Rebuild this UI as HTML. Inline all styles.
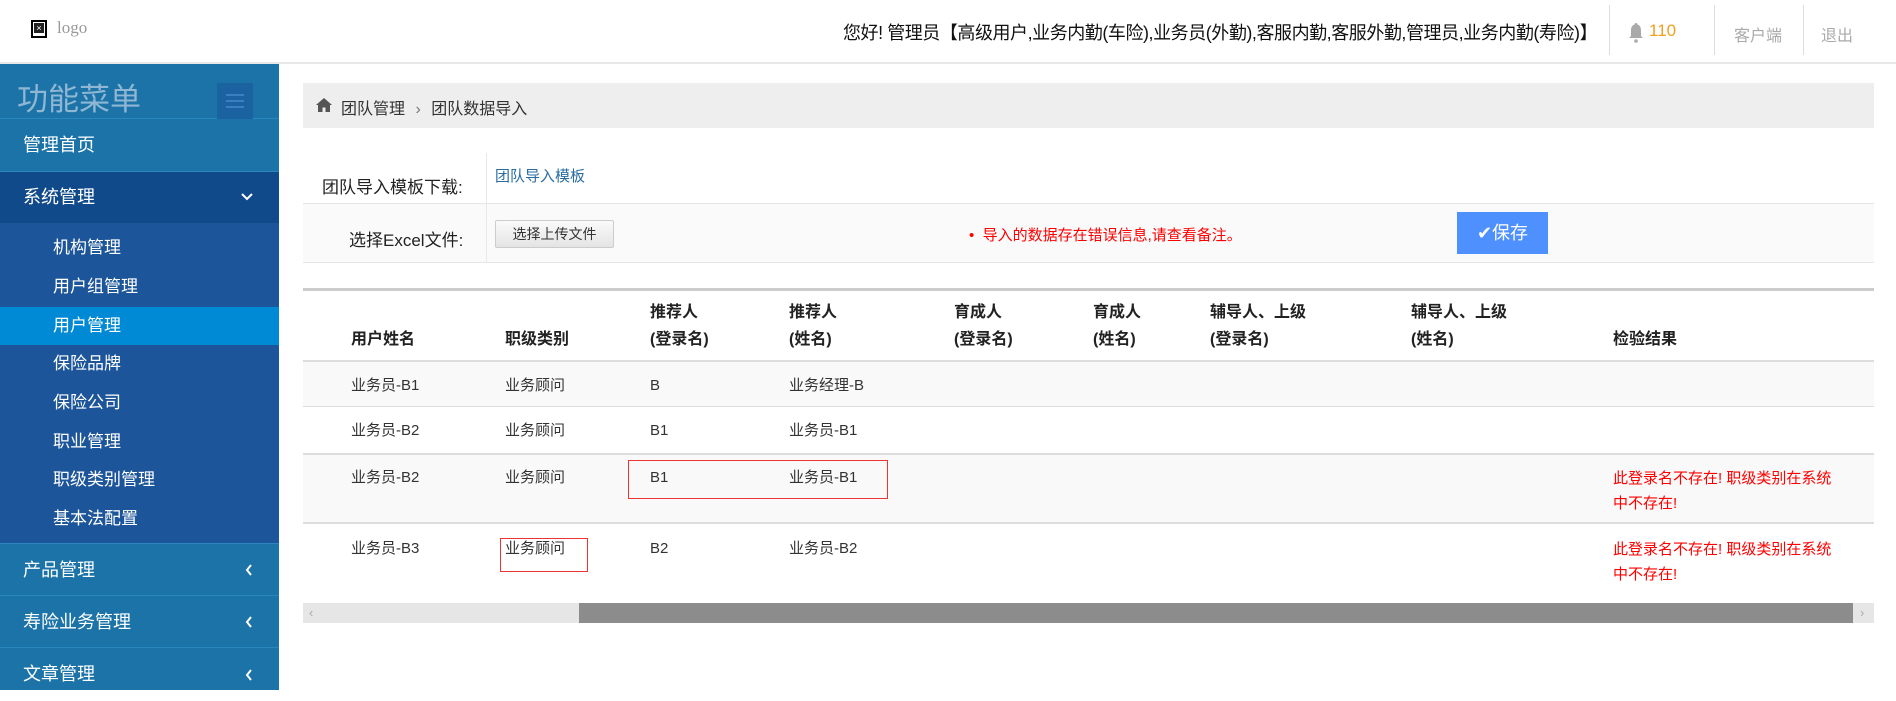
<!DOCTYPE html>
<html><head><meta charset="utf-8"><style>
*{margin:0;padding:0;box-sizing:border-box}
body{width:1896px;height:690px;overflow:hidden;background:#fff;font-family:"Liberation Sans","Noto Sans CJK SC",sans-serif;color:#333;position:relative}
.a{position:absolute;white-space:nowrap}
.side{position:absolute;left:0;top:64px;width:279px;height:626px;background:#1b73a8}
.mi{position:absolute;left:0;width:279px;color:#fff;font-size:18px;padding-left:23px;border-bottom:1px solid #2a86bf}
.si{position:absolute;left:0;width:279px;height:38px;line-height:38px;color:#fff;font-size:17px;padding-left:53px}
.th{position:absolute;font-weight:bold;font-size:16px;line-height:27px;color:#222}
.td{position:absolute;font-size:15px;line-height:20px;color:#333}
.red{color:#f00;font-size:15px;line-height:25px}
.chl{position:absolute;left:245px;top:50%;margin-top:-6px}
</style></head><body>
<div class="a" style="left:0;top:0;width:1896px;height:64px;border-bottom:2px solid #e8e8e8"></div>
<div class="a" style="left:31px;top:20px;width:16px;height:18px;border:2px solid #000;background:#fff"><div style="position:absolute;left:1px;top:1px;width:10px;height:10px;background:#222;color:#fff;font-size:9px;line-height:10px;text-align:center">×</div></div>
<div class="a" style="left:57px;top:18px;font-size:17px;color:#999;font-family:'Liberation Serif',serif">logo</div>
<div class="a" style="left:843px;top:19px;font-size:18px;color:#111;letter-spacing:-0.45px">您好! 管理员【高级用户,业务内勤(车险),业务员(外勤),客服内勤,客服外勤,管理员,业务内勤(寿险)】</div>
<div class="a" style="left:1609px;top:5px;width:1px;height:50px;background:#ddd"></div>
<div class="a" style="left:1714px;top:5px;width:1px;height:50px;background:#ddd"></div>
<div class="a" style="left:1803px;top:5px;width:1px;height:50px;background:#ddd"></div>
<svg class="a" style="left:1628px;top:22px" width="16" height="22" viewBox="0 0 16 22"><path d="M8 1c-1 0-1.5.7-1.5 1.5C3.5 3.5 3 6 3 9v5l-2 2h14l-2-2V9c0-3-.5-5.5-3.5-6.5C9.5 1.7 9 1 8 1z" fill="#aaa"/><circle cx="8" cy="19" r="1.8" fill="#aaa"/></svg>
<div class="a" style="left:1649px;top:21px;font-size:17px;color:#f0a020">110</div>
<div class="a" style="left:1734px;top:22px;font-size:16px;color:#aaa">客户端</div>
<div class="a" style="left:1821px;top:22px;font-size:16px;color:#aaa">退出</div>
<div class="side"></div>
<div class="a" style="left:0;top:66px;width:279px;height:53px;border-bottom:1px solid #2a86bf"></div>
<div class="a" style="left:17px;top:74px;font-size:31px;color:#8fb6d2">功能菜单</div>
<div class="a" style="left:217px;top:83px;width:36px;height:36px;background:#1a62a0"><div style="margin:11px 9px;height:2px;background:#3a7fc0;box-shadow:0 6px 0 #3a7fc0,0 12px 0 #3a7fc0"></div></div>
<div class="mi" style="top:119px;height:53px;line-height:53px">管理首页</div>
<div class="mi" style="top:172px;height:51px;line-height:51px;background:#104a8a;border:none">系统管理<svg style="position:absolute;left:241px;top:21px" width="12" height="8" viewBox="0 0 12 8"><path d="M1 1l5 5 5-5" stroke="#fff" stroke-width="2" fill="none"/></svg></div>
<div class="a" style="left:0;top:223px;width:279px;height:320px;background:#1c5599"></div>
<div class="si" style="top:229px">机构管理</div>
<div class="si" style="top:268px">用户组管理</div>
<div class="si" style="top:307px;background:#0089d5">用户管理</div>
<div class="si" style="top:345px">保险品牌</div>
<div class="si" style="top:384px">保险公司</div>
<div class="si" style="top:423px">职业管理</div>
<div class="si" style="top:461px">职级类别管理</div>
<div class="si" style="top:500px">基本法配置</div>
<div class="mi" style="top:543px;height:53px;line-height:53px;border-top:1px solid #2a86bf">产品管理<svg class="chl" width="8" height="12" viewBox="0 0 8 12"><path d="M6 1L2 6l4 5" stroke="#fff" stroke-width="2" fill="none"/></svg></div>
<div class="mi" style="top:596px;height:52px;line-height:52px">寿险业务管理<svg class="chl" width="8" height="12" viewBox="0 0 8 12"><path d="M6 1L2 6l4 5" stroke="#fff" stroke-width="2" fill="none"/></svg></div>
<div class="mi" style="top:648px;height:53px;line-height:53px;border:none">文章管理<svg class="chl" width="8" height="12" viewBox="0 0 8 12"><path d="M6 1L2 6l4 5" stroke="#fff" stroke-width="2" fill="none"/></svg></div>
<div class="a" style="left:303px;top:83px;width:1571px;height:45px;background:#eee"></div>
<svg class="a" style="left:316px;top:98px" width="16" height="14" viewBox="0 0 16 14"><path d="M8 0L0 7h2v7h4.5V9.5h3V14H14V7h2z" fill="#555"/></svg>
<div class="a" style="left:341px;top:95px;font-size:16px;color:#333">团队管理 <span style="color:#777;margin:0 6px">›</span> 团队数据导入</div>
<div class="a" style="left:303px;top:203px;width:1571px;height:60px;background:#fafafa;border-top:1px solid #e6e6e6;border-bottom:1px solid #e6e6e6"></div>
<div class="a" style="left:486px;top:153px;width:1px;height:110px;background:#e8e8e8"></div>
<div class="a" style="left:322px;top:173px;font-size:17px;color:#222">团队导入模板下载:</div>
<div class="a" style="left:495px;top:165px;font-size:15px;color:#2a6ca0">团队导入模板</div>
<div class="a" style="left:349px;top:226px;font-size:17px;color:#222">选择Excel文件:</div>
<div class="a" style="left:495px;top:220px;width:119px;height:28px;border:1px solid #ccc;border-radius:2px;background:linear-gradient(#fafafa,#e4e4e4);font-size:14px;line-height:26px;text-align:center;color:#333">选择上传文件</div>
<div class="a" style="left:969px;top:224px;font-size:15px;color:#f00">• &nbsp;导入的数据存在错误信息,请查看备注。</div>
<div class="a" style="left:1457px;top:212px;width:91px;height:42px;background:#4d90fe;color:#fff;font-size:18px;line-height:42px;text-align:center">✔保存</div>
<div class="a" style="left:303px;top:288px;width:1571px;height:3px;background:#ccc"></div>
<div class="th" style="left:351px;top:326px">用户姓名</div>
<div class="th" style="left:505px;top:326px">职级类别</div>
<div class="th" style="left:650px;top:299px">推荐人<br>(登录名)</div>
<div class="th" style="left:789px;top:299px">推荐人<br>(姓名)</div>
<div class="th" style="left:954px;top:299px">育成人<br>(登录名)</div>
<div class="th" style="left:1093px;top:299px">育成人<br>(姓名)</div>
<div class="th" style="left:1210px;top:299px">辅导人、上级<br>(登录名)</div>
<div class="th" style="left:1411px;top:299px">辅导人、上级<br>(姓名)</div>
<div class="th" style="left:1613px;top:326px">检验结果</div>
<div class="a" style="left:303px;top:360px;width:1571px;height:47px;background:#f9f9f9;border-top:2px solid #ddd;border-bottom:1px solid #ddd"></div>
<div class="a" style="left:303px;top:453px;width:1571px;height:71px;background:#f9f9f9;border-top:2px solid #ddd;border-bottom:2px solid #ddd"></div>
<div class="td" style="left:351px;top:376px">业务员-B1</div><div class="td" style="left:505px;top:376px">业务顾问</div><div class="td" style="left:650px;top:376px">B</div><div class="td" style="left:789px;top:376px">业务经理-B</div>
<div class="td" style="left:351px;top:421px">业务员-B2</div><div class="td" style="left:505px;top:421px">业务顾问</div><div class="td" style="left:650px;top:421px">B1</div><div class="td" style="left:789px;top:421px">业务员-B1</div>
<div class="td" style="left:351px;top:468px">业务员-B2</div><div class="td" style="left:505px;top:468px">业务顾问</div><div class="td" style="left:650px;top:468px">B1</div><div class="td" style="left:789px;top:468px">业务员-B1</div>
<div class="td red" style="left:1613px;top:466px">此登录名不存在! 职级类别在系统<br>中不存在!</div>
<div class="a" style="left:628px;top:460px;width:260px;height:39px;border:1px solid #e33"></div>
<div class="td" style="left:351px;top:539px">业务员-B3</div><div class="td" style="left:505px;top:539px">业务顾问</div><div class="td" style="left:650px;top:539px">B2</div><div class="td" style="left:789px;top:539px">业务员-B2</div>
<div class="td red" style="left:1613px;top:537px">此登录名不存在! 职级类别在系统<br>中不存在!</div>
<div class="a" style="left:500px;top:538px;width:88px;height:34px;border:1px solid #e33"></div>
<div class="a" style="left:303px;top:603px;width:1571px;height:20px;background:#e6e6e6"></div>
<div class="a" style="left:579px;top:603px;width:1274px;height:20px;background:#8c8c8c"></div>
<div class="a" style="left:309px;top:603px;font-size:13px;color:#aaa;line-height:20px">‹</div>
<div class="a" style="left:1860px;top:603px;font-size:13px;color:#aaa;line-height:20px">›</div>
</body></html>
